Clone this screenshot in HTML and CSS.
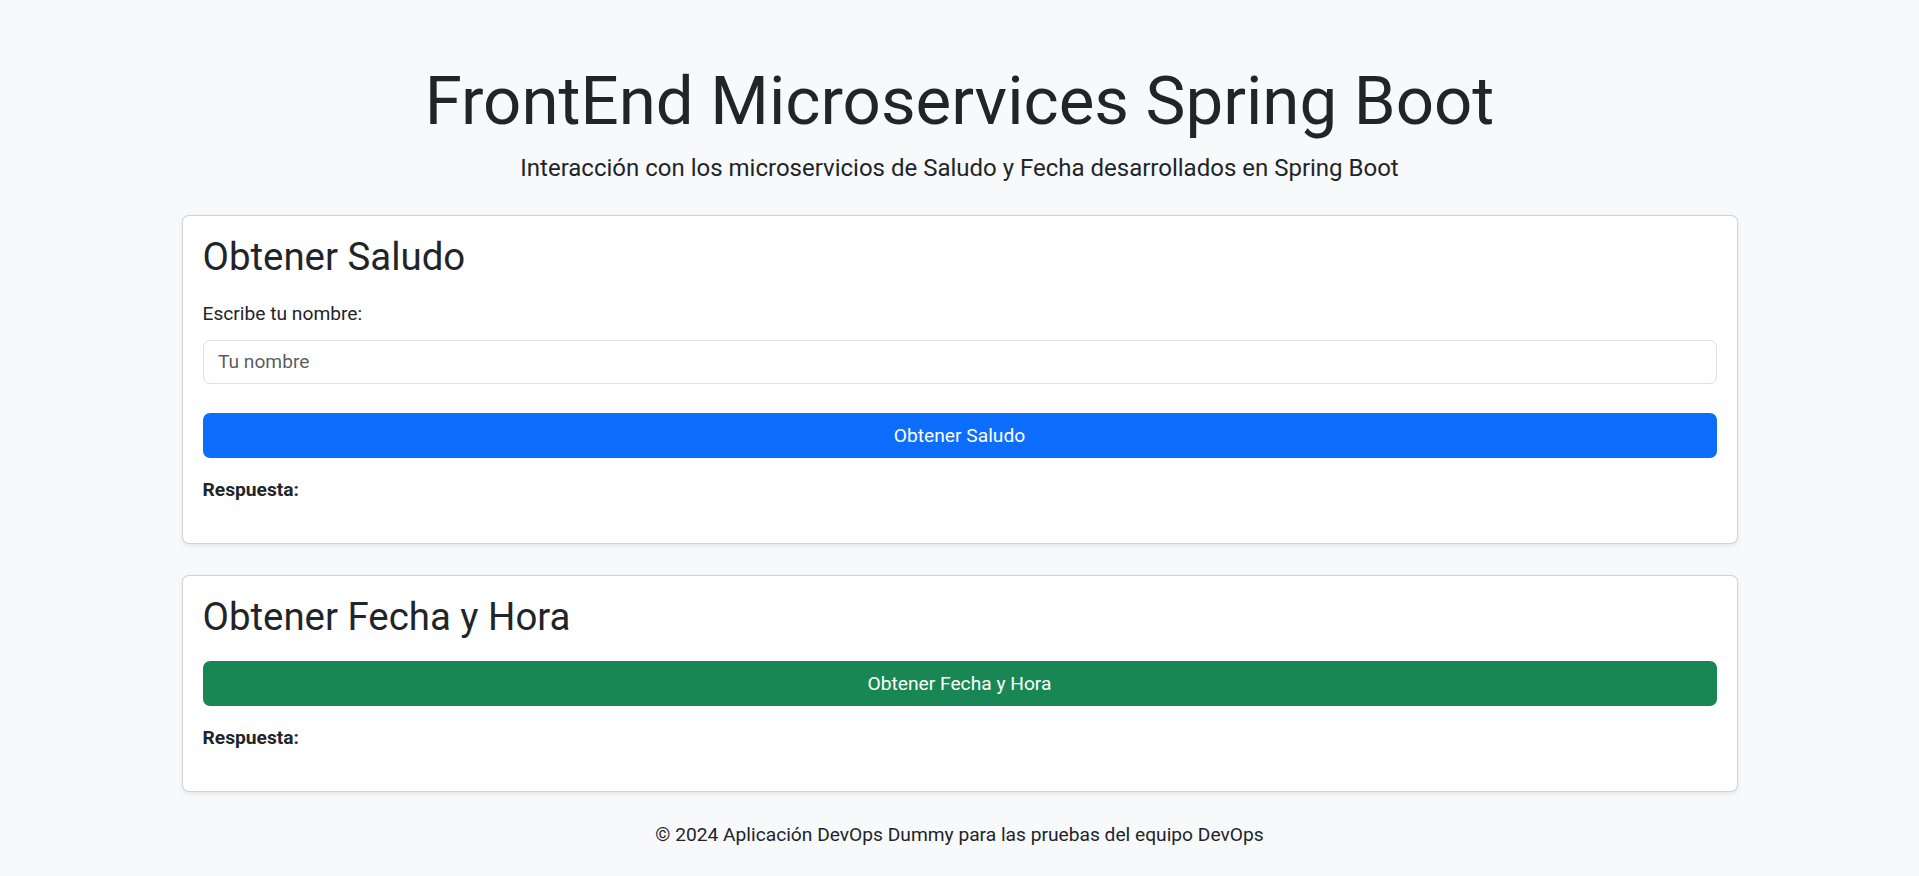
FILE: index.html
```html
<!DOCTYPE html>
<html lang="es">
<head>
<meta charset="utf-8">
<title>FrontEnd Microservices Spring Boot</title>
<link rel="stylesheet" href="styles.css">
</head>
<body>
<div class="page">
  <header class="hero">
    <h1 class="hero-title">FrontEnd Microservices Spring Boot</h1>
    <p class="hero-lead">Interacción con los microservicios de Saludo y Fecha desarrollados en Spring Boot</p>
  </header>
  <main class="cards">
    <section class="card">
      <h2 class="card-title">Obtener Saludo</h2>
      <label class="field-label" for="nombre">Escribe tu nombre:</label>
      <input class="field-input" id="nombre" type="text" placeholder="Tu nombre">
      <button class="btn btn-primary btn-spaced" type="button">Obtener Saludo</button>
      <div class="response"><strong>Respuesta:</strong> <span></span></div>
    </section>
    <section class="card">
      <h2 class="card-title">Obtener Fecha y Hora</h2>
      <button class="btn btn-success" type="button">Obtener Fecha y Hora</button>
      <div class="response"><strong>Respuesta:</strong> <span></span></div>
    </section>
  </main>
  <footer class="footer">© 2024 Aplicación DevOps Dummy para las pruebas del equipo DevOps</footer>
</div>
</body>
</html>
```
FILE: styles.css
```css
* { box-sizing: border-box; }
html, body { margin: 0; padding: 0; }
body {
  background: #f8f9fa;
  color: #212529;
  font-family: Roboto, "Liberation Sans", sans-serif;
  font-size: 19.2px;
  line-height: 1.5;
}
.page {
  display: flex;
  flex-direction: column;
  align-items: center;
  padding-top: 61px;
}
.hero { text-align: center; }
.hero-title {
  margin: 0;
  font-size: 67.2px;
  font-weight: 400;
  line-height: 80.64px;
}
.hero-lead {
  margin: 8.5px 0 0;
  font-size: 24px;
  font-weight: 400;
  line-height: 36px;
}
.cards {
  display: flex;
  flex-direction: column;
  gap: 31px;
  margin-top: 28.4px;
  width: 1556px;
}
.card {
  display: flex;
  flex-direction: column;
  background: #fff;
  border: 1px solid rgba(0, 0, 0, 0.175);
  border-radius: 7px;
  box-shadow: 0 2px 5px rgba(0, 0, 0, 0.075);
  padding: 17px 20px 38px;
}
.card-title {
  margin: 0 0 20px;
  font-size: 38.4px;
  font-weight: 400;
  line-height: 48px;
}
.field-label {
  display: block;
  margin-top: 1px;
  line-height: 24px;
}
.field-input {
  margin-top: 14px;
  height: 44px;
  border: 1px solid #dee2e6;
  border-radius: 7px;
  padding: 0 14.4px;
  font-family: inherit;
  font-size: 19.2px;
  color: #212529;
  background: #fff;
}
.field-input::placeholder { color: rgba(33, 37, 41, 0.75); }
.btn {
  height: 45px;
  border: 0;
  border-radius: 7px;
  font-family: inherit;
  font-size: 19.2px;
  color: #fff;
  cursor: pointer;
}
.btn-spaced { margin-top: 29px; }
.btn-primary { background: #0d6efd; }
.btn-success { background: #198754; }
.response {
  margin-top: 17px;
  line-height: 30px;
}
.response strong { font-weight: 700; }
.footer {
  margin-top: 28px;
  line-height: 30px;
  text-align: center;
}
```
